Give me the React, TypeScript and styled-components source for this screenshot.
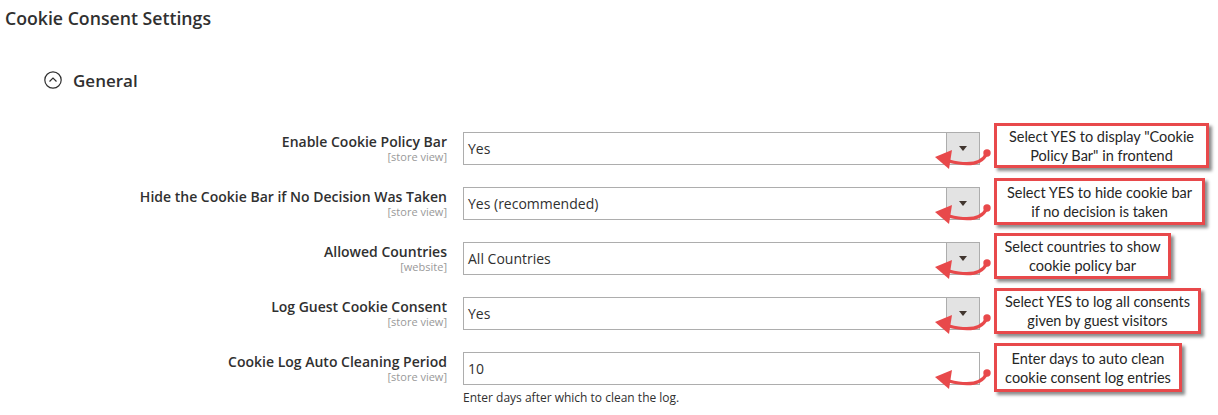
import React from "react";
import styled, { createGlobalStyle } from "styled-components";

const Global = createGlobalStyle`
  html, body { margin: 0; padding: 0; background: #fff; }
  body { font-family: "Open Sans", "Noto Sans", sans-serif; color: #303030; }
`;

const Page = styled.div`
  width: 1218px;
  height: 415px;
  overflow: hidden;
`;

const Title = styled.h1`
  margin: 0;
  padding-left: 5px;
  font-size: 17.7px;
  font-weight: 600;
  line-height: 36px;
  color: #303030;
`;

const SectionHeader = styled.div`
  display: flex;
  align-items: center;
  gap: 11px;
  margin: 30px 0 38px 44px;
  height: 28px;
  font-size: 17px;
  font-weight: 600;
  color: #303030;
`;

const Fields = styled.div`
  display: flex;
  flex-direction: column;
  gap: 22px;
`;

const Row = styled.div`
  display: flex;
  align-items: flex-start;
  height: 33px;
`;

const LabelCol = styled.div`
  width: 447px;
  margin-right: 16px;
  text-align: right;
  display: flex;
  flex-direction: column;
  align-items: flex-end;
`;

const LabelText = styled.span`
  font-size: 14px;
  font-weight: 600;
  line-height: 20px;
  color: #303030;
`;

const Scope = styled.span`
  font-size: 11px;
  line-height: 12px;
  margin-top: -1px;
  color: #999;
`;

const Control = styled.div`
  width: 517px;
  display: flex;
  flex-direction: column;
`;

const SelectBox = styled.div`
  box-sizing: border-box;
  height: 33px;
  border: 1px solid #adadad;
  display: flex;
  align-items: stretch;
  background: #fff;
`;

const Value = styled.span`
  flex: 1;
  padding-left: 4px;
  font-size: 14px;
  line-height: 31px;
  color: #303030;
`;

const DropButton = styled.span`
  width: 32px;
  background: #e3e3e3;
  border-left: 1px solid #adadad;
  display: flex;
  align-items: center;
  justify-content: center;
`;

const Caret = styled.span`
  width: 0;
  height: 0;
  border-left: 4px solid transparent;
  border-right: 4px solid transparent;
  border-top: 5px solid #41362f;
`;

const Note = styled.div`
  margin-top: 5px;
  font-size: 12px;
  line-height: 16px;
  color: #303030;
`;

const Annotation = styled.div`
  position: relative;
  margin-left: 14px;
  margin-top: -9px;
`;

const Callout = styled.div<{ $w: number; $h: number }>`
  box-sizing: border-box;
  width: ${(p) => p.$w}px;
  height: ${(p) => p.$h}px;
  border: 3px solid #e8494b;
  background: #fff;
  box-shadow: 3px 3px 3px rgba(0, 0, 0, 0.45);
  display: flex;
  align-items: center;
  justify-content: center;
  text-align: center;
  font-family: Lato, "Open Sans", sans-serif;
  font-weight: 400;
  font-size: 14.5px;
  line-height: 19px;
  color: #262626;
`;

const ArrowSvg = styled.svg`
  position: absolute;
  left: -64px;
  top: 23px;
  overflow: visible;
`;

const CollapseIcon = () => (
  <svg width="18" height="18" viewBox="0 0 18 18">
    <circle cx="9" cy="9" r="8.2" fill="none" stroke="#303030" strokeWidth="1.2" />
    <polyline points="5.5,10.5 9,7 12.5,10.5" fill="none" stroke="#303030" strokeWidth="1.2" />
  </svg>
);

const Arrow = () => (
  <ArrowSvg width="64" height="26" viewBox="0 0 64 26">
    <path d="M57,7 C52,18 38,20 19,15" fill="none" stroke="#e8494b" strokeWidth="3.2" strokeLinecap="round" />
    <circle cx="57" cy="7" r="3.7" fill="#e8494b" />
    <polygon points="5,11 22,4 19,23" fill="#e8494b" />
  </ArrowSvg>
);

type Field = {
  label: string;
  scope: string;
  value: string;
  select: boolean;
  note?: string;
  callout: string[];
  w: number;
  h: number;
};

const fields: Field[] = [
  {
    label: "Enable Cookie Policy Bar",
    scope: "[store view]",
    value: "Yes",
    select: true,
    callout: ['Select YES to display "Cookie', 'Policy Bar" in frontend'],
    w: 215,
    h: 45,
  },
  {
    label: "Hide the Cookie Bar if No Decision Was Taken",
    scope: "[store view]",
    value: "Yes (recommended)",
    select: true,
    callout: ["Select YES to hide cookie bar", "if no decision is taken"],
    w: 211,
    h: 47,
  },
  {
    label: "Allowed Countries",
    scope: "[website]",
    value: "All Countries",
    select: true,
    callout: ["Select countries to show", "cookie policy bar"],
    w: 177,
    h: 46,
  },
  {
    label: "Log Guest Cookie Consent",
    scope: "[store view]",
    value: "Yes",
    select: true,
    callout: ["Select YES to log all consents", "given by guest visitors"],
    w: 207,
    h: 46,
  },
  {
    label: "Cookie Log Auto Cleaning Period",
    scope: "[store view]",
    value: "10",
    select: false,
    note: "Enter days after which to clean the log.",
    callout: ["Enter days to auto clean", "cookie consent log entries"],
    w: 188,
    h: 49,
  },
];

export default function App() {
  return (
    <>
      <Global />
      <Page>
        <Title>Cookie Consent Settings</Title>
        <SectionHeader>
          <CollapseIcon />
          <span>General</span>
        </SectionHeader>
        <Fields>
          {fields.map((f) => (
            <Row key={f.label}>
              <LabelCol>
                <LabelText>{f.label}</LabelText>
                <Scope>{f.scope}</Scope>
              </LabelCol>
              <Control>
                <SelectBox>
                  <Value>{f.value}</Value>
                  {f.select && (
                    <DropButton>
                      <Caret />
                    </DropButton>
                  )}
                </SelectBox>
                {f.note && <Note>{f.note}</Note>}
              </Control>
              <Annotation>
                <Arrow />
                <Callout $w={f.w} $h={f.h}>
                  <div>
                    {f.callout[0]}
                    <br />
                    {f.callout[1]}
                  </div>
                </Callout>
              </Annotation>
            </Row>
          ))}
        </Fields>
      </Page>
    </>
  );
}
